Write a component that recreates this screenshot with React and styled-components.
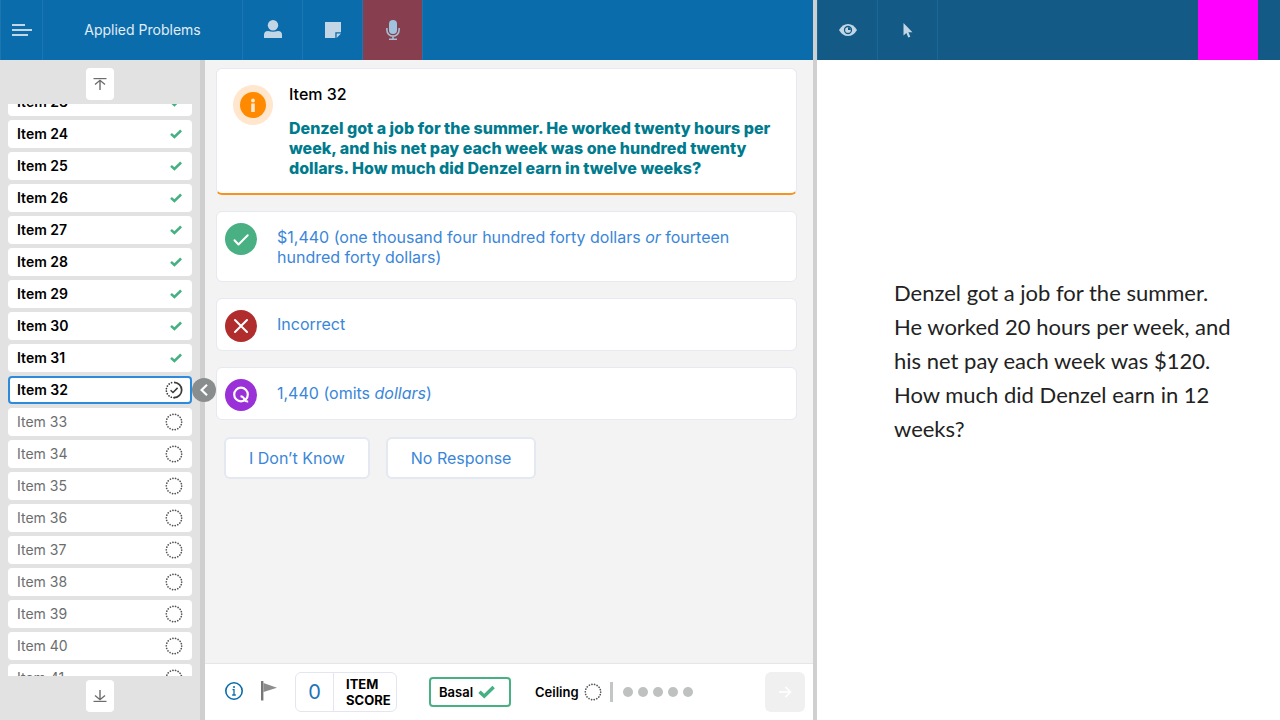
import React, { useLayoutEffect, useRef } from "react";
import styled, { createGlobalStyle, css } from "styled-components";

const GlobalStyle = createGlobalStyle`
  *, *::before, *::after { box-sizing: border-box; }
  body { margin: 0; font-family: Inter, "Liberation Sans", sans-serif; color: #000; }
  button { font: inherit; margin: 0; padding: 0; border: 0; background: none; cursor: pointer; }
  h1, h2, p, ul { margin: 0; padding: 0; font-weight: inherit; }
  svg { display: block; flex: none; }
`;

const Screen = styled.div`
  display: flex;
  height: 100vh;
  overflow: hidden;
`;

const ExaminerPane = styled.section`
  flex: 813 1 0;
  min-width: 0;
  display: flex;
  flex-direction: column;
`;

const PaneDivider = styled.div`
  flex: none;
  width: 4px;
  background: #d0d0d0;
`;

const ExamineePane = styled.section`
  flex: 463 1 0;
  min-width: 0;
  display: flex;
  flex-direction: column;
  background: #fff;
`;

const Toolbar = styled.header`
  flex: none;
  display: flex;
  height: 60px;
  background: ${(p) => (p.$dim ? "#135b86" : "#0a6cab")};
  ${(p) =>
    p.$dim &&
    css`
      padding-right: 22px;
    `}
`;

const ToolButton = styled.button`
  display: flex;
  align-items: center;
  justify-content: center;
  width: ${(p) => p.$width || 60}px;
  height: 60px;
  color: #c3d6e6;
  background: ${(p) => p.$fill || "transparent"};
  border-left: 1px solid ${(p) => (p.$dim ? "#1a679a" : "#1b76b1")};
`;

const ToolbarTitle = styled.h1`
  width: 200px;
  line-height: 60px;
  text-align: center;
  font-size: 14px;
  font-weight: 400;
  color: #e2edf5;
  border-left: 1px solid #1b76b1;
`;

const ToolbarSpacer = styled.div`
  flex: 1;
  border-left: 1px solid ${(p) => (p.$dim ? "#1a679a" : "#1b76b1")};
`;

const ColorSwatch = styled.button`
  width: 60px;
  height: 60px;
  background: #ff00ff;
`;

const Workspace = styled.div`
  flex: 1;
  min-height: 0;
  display: flex;
`;

const Sidebar = styled.nav`
  position: relative;
  flex: none;
  width: 205px;
  display: flex;
  flex-direction: column;
  background: #e2e2e2;
  border-right: 5px solid #cfcfcf;
`;

const JumpBar = styled.div`
  flex: none;
  height: 44px;
  display: flex;
  align-items: center;
  justify-content: center;
  padding-top: ${(p) => (p.$top ? 4 : 0)}px;
  padding-bottom: ${(p) => (p.$top ? 0 : 4)}px;
`;

const JumpButton = styled.button`
  display: flex;
  align-items: center;
  justify-content: center;
  width: 28px;
  height: 32px;
  border-radius: 4px;
  background: #fff;
  color: #6b6d6d;
`;

const ItemList = styled.ul`
  flex: 1;
  min-height: 0;
  overflow-y: auto;
  scrollbar-width: none;
  display: flex;
  flex-direction: column;
  gap: 4px;
  padding: 0 8px;
  list-style: none;
`;

const ItemRow = styled.li`
  flex: none;
  height: 28px;
`;

const ItemButton = styled.button`
  display: flex;
  align-items: center;
  justify-content: space-between;
  width: 100%;
  height: 28px;
  padding: 0 7px 1px;
  border: 2px solid #fff;
  border-radius: 4px;
  background: #fff;
  font-size: 14px;
  line-height: 16px;
  font-weight: ${(p) => (p.$pending ? 400 : 600)};
  color: ${(p) => (p.$pending ? "#6c6e6e" : "#000")};
  ${(p) =>
    p.$current &&
    css`
      border-color: #2e8bdc;
    `}
`;

const StatusSlot = styled.span`
  display: flex;
  justify-content: center;
  min-width: 14px;
`;

const CollapseButton = styled.button`
  position: absolute;
  top: calc(50% - 12px);
  right: -16px;
  display: flex;
  align-items: center;
  justify-content: center;
  width: 24px;
  height: 24px;
  border-radius: 50%;
  background: #8a8d8d;
  color: #fff;
`;

const Main = styled.main`
  flex: 1;
  min-width: 0;
  display: flex;
  flex-direction: column;
  background: #f3f3f3;
`;

const Cards = styled.div`
  flex: 1;
  min-height: 0;
  display: flex;
  flex-direction: column;
  gap: 16px;
  padding: 8px 16px 0 11px;
`;

const PromptCard = styled.article`
  display: flex;
  gap: 16px;
  padding: 16px 16px 15px;
  background: #fff;
  border: 1px solid #e6e8f2;
  border-bottom: 2px solid #f7941d;
  border-radius: 6px;
`;

const PromptBody = styled.div`
  flex: 1;
`;

const PromptTitle = styled.h2`
  font-size: 16px;
  line-height: 18px;
  font-weight: 500;
`;

const PromptText = styled.p`
  margin-top: 15px;
  font-size: 16px;
  line-height: 20px;
  font-weight: 800;
  color: #007b8e;
`;

const AnswerCard = styled.button`
  display: flex;
  align-items: flex-start;
  gap: 20px;
  width: 100%;
  padding: 11px 8px 8px;
  background: #fff;
  border: 1px solid #e6e8f2;
  border-radius: 6px;
  text-align: left;
`;

const AnswerText = styled.span`
  flex: 1;
  padding: 4px 48px 6px 0;
  font-size: 16px;
  line-height: 20px;
  font-weight: 400;
  color: #3a86d8;
`;

const OtherAnswers = styled.div`
  display: flex;
  gap: 16px;
  padding: 1px 0 0 8px;
`;

const OutlineButton = styled.button`
  height: 42px;
  padding: 0 23px;
  border: 2px solid #e3e8f1;
  border-radius: 6px;
  background: #fff;
  font-size: 16px;
  font-weight: 400;
  color: #3a86d8;
`;

const Footer = styled.footer`
  flex: none;
  display: flex;
  align-items: center;
  height: 57px;
  padding: 0 8px 0 20px;
  background: #fff;
  border-top: 1px solid #e6e6e6;
`;

const IconButton = styled.button`
  display: flex;
  margin-right: 18px;
  padding-bottom: 2px;
`;

const ScoreBox = styled.div`
  display: flex;
  align-items: center;
  width: 102px;
  height: 40px;
  border: 1px solid #e3e6f1;
  border-radius: 6px;
`;

const ScoreValue = styled.output`
  width: 38px;
  line-height: 38px;
  text-align: center;
  font-size: 20px;
  color: #2272b8;
  border-right: 1px solid #e3e6f1;
`;

const ScoreLabel = styled.span`
  padding-left: 12px;
  font-size: 13px;
  line-height: 16px;
  font-weight: 700;
`;

const BasalButton = styled.button`
  display: flex;
  align-items: center;
  gap: 5px;
  width: 82px;
  height: 30px;
  margin-left: 32px;
  padding-left: 8px;
  border: 2px solid #48b083;
  border-radius: 4px;
  font-size: 13px;
  font-weight: 600;
`;

const Ceiling = styled.div`
  display: flex;
  align-items: center;
  gap: 5px;
  margin-left: 24px;
  font-size: 13px;
  font-weight: 600;
`;

const FooterRule = styled.span`
  width: 3px;
  height: 20px;
  margin-left: 8px;
  background: #c4c5c5;
`;

const Dots = styled.div`
  display: flex;
  gap: 5px;
  margin-left: 10px;
`;

const Dot = styled.span`
  width: 10px;
  height: 10px;
  border-radius: 50%;
  background: #bfc1c1;
`;

const NextButton = styled.button`
  display: flex;
  align-items: center;
  justify-content: center;
  width: 40px;
  height: 40px;
  margin-left: auto;
  border-radius: 6px;
  background: #f0f0f0;
  color: #fff;
`;

const Stimulus = styled.p`
  padding: 216px 46px 0 77px;
  font-family: Lato, "Liberation Sans", sans-serif;
  font-size: 22px;
  line-height: 34px;
  color: #222;
`;

const MenuIcon = () => (
  <svg width="20" height="14" viewBox="0 0 20 14" stroke="currentColor" strokeWidth="2" aria-hidden="true">
    <path d="M0 2h13M0 7h20M0 12h16" />
  </svg>
);

const PersonIcon = () => (
  <svg width="18" height="20" viewBox="0 0 18 20" fill="currentColor" aria-hidden="true">
    <circle cx="9" cy="5.200" r="5.200" />
    <path d="M0 17.500V15a4 4 0 0 1 4-4q5 1.400 10 0a4 4 0 0 1 4 4v2.500a.5.5 0 0 1-.5.5H.5a.5.5 0 0 1-.5-.5z" />
  </svg>
);

const NoteIcon = () => (
  <svg width="16" height="16" viewBox="0 0 16 16" fill="currentColor" aria-hidden="true">
    <path d="M0 0h16v10.300h-5.700V16H0z" />
    <path d="M11.600 11.600H16L11.600 16z" />
  </svg>
);

const MicIcon = () => (
  <svg width="14" height="20" viewBox="0 0 14 20" aria-hidden="true">
    <rect x="3" y="0" width="8" height="14" rx="4" fill="#a0c4de" />
    <path d="M.9 8v2a6.100 6.100 0 0 0 12.200 0V8M7 16v3M3 19.200h8" fill="none" stroke="#a9bcd0" strokeWidth="1.600" />
  </svg>
);

const EyeIcon = () => (
  <svg width="18" height="12" viewBox="0 0 18 12" aria-hidden="true">
    <path d="M0 6Q3.500 0 9 0t9 6q-3.500 6-9 6T0 6z" fill="currentColor" />
    <circle cx="9" cy="6" r="3.500" fill="none" stroke="#135b86" strokeWidth="1.300" />
    <path d="M9 6V3.200A2.800 2.800 0 0 1 11.800 6z" fill="#135b86" />
  </svg>
);

const CursorIcon = () => (
  <svg width="10" height="15" viewBox="0 0 10 15" fill="currentColor" aria-hidden="true">
    <path d="M.5 0v12.600l2.900-2.700 1.900 4.600 2-.8-1.900-4.500h4z" />
  </svg>
);

const JumpIcon = ({ down }) => (
  <svg width="14" height="12" viewBox="0 0 14 12" fill="none" stroke="currentColor" aria-hidden="true">
    {down ? (
      <>
        <path d="M7 0v9.500M2 5.500 7 9.700l5-4.200" strokeWidth="1.400" />
        <path d="M.5 11.400h13" strokeWidth="1.200" />
      </>
    ) : (
      <>
        <path d="M7 12V2.500M2 6.500 7 2.300l5 4.200" strokeWidth="1.400" />
        <path d="M.5.6h13" strokeWidth="1.200" />
      </>
    )}
  </svg>
);

const TickIcon = ({ width = 12, height = 10 }) => (
  <svg width={width} height={height} viewBox="0 0 12 10" fill="none" stroke="#45b182" strokeWidth="2.500" aria-hidden="true">
    <path d="M1 4.800 4.400 8 11.100 1.500" />
  </svg>
);

const DottedCircle = () => (
  <svg width="18" height="18" viewBox="0 0 18 18" fill="none" stroke="#555" aria-hidden="true">
    <circle cx="9" cy="9" r="7.700" strokeWidth="1.700" strokeLinecap="round" strokeDasharray=".05 2.638" />
  </svg>
);

const ProgressCircle = () => (
  <svg width="18" height="18" viewBox="0 0 18 18" fill="none" stroke="#3a3a3a" aria-hidden="true">
    <path d="M9 1.300a7.700 7.700 0 0 1 0 15.400" strokeWidth="1.700" />
    <path d="M9 16.700A7.700 7.700 0 0 1 9 1.300" strokeWidth="1.700" strokeLinecap="round" strokeDasharray=".05 2.638" />
    <path d="M5.600 9.200 8 11.500l4.600-4.600" strokeWidth="1.500" />
  </svg>
);

const PromptIcon = () => (
  <svg width="40" height="40" viewBox="0 0 40 40" aria-hidden="true">
    <circle cx="20" cy="20" r="20" fill="#ffe6cc" />
    <circle cx="20" cy="20" r="13" fill="#ff8a00" />
    <circle cx="20" cy="15.500" r="1.900" fill="#ffe6cc" />
    <path d="M20 18.500V27" stroke="#ffe6cc" strokeWidth="3.600" />
  </svg>
);

const AnswerIcon = ({ kind }) => {
  const fill = { correct: "#48b083", incorrect: "#b12d2d", query: "#9a30d8" }[kind];
  return (
    <svg width="32" height="32" viewBox="0 0 32 32" fill="none" stroke="#fff" strokeWidth="2" aria-hidden="true">
      <circle cx="16" cy="16" r="16" fill={fill} stroke="none" />
      {kind === "correct" && <path d="m9.500 17.200 4 4.300 9.200-9.300" strokeLinecap="round" strokeLinejoin="round" />}
      {kind === "incorrect" && <path d="m10 10 12 12M22 10 10 22" strokeLinecap="round" />}
      {kind === "query" && (
        <>
          <circle cx="16" cy="15.500" r="6.800" strokeWidth="2.200" />
          <path d="M15.500 17.200q3 .2 4.200 3.600.6 1.800 3.500 1.600" strokeWidth="2" />
        </>
      )}
    </svg>
  );
};

const InfoIcon = () => (
  <svg width="18" height="18" viewBox="0 0 18 18" fill="none" stroke="#0a6cab" aria-hidden="true">
    <circle cx="9" cy="9" r="8.200" strokeWidth="1.600" />
    <path d="M7.500 7.600H9V13M7.200 13h3.600" strokeWidth="1.300" />
    <circle cx="9" cy="5" r="1" fill="#0a6cab" stroke="none" />
  </svg>
);

const FlagIcon = () => (
  <svg width="16" height="20" viewBox="0 0 16 20" aria-hidden="true">
    <path d="M2.500 2 16 6.800 2.500 11z" fill="#8d8d8d" />
    <path d="M1.200 0v19.500" stroke="#777" strokeWidth="2.400" />
  </svg>
);

const FIRST_ITEM = 23;
const LAST_ITEM = 41;
const CURRENT_ITEM = 32;
const items = Array.from({ length: LAST_ITEM - FIRST_ITEM + 1 }, (_, i) => FIRST_ITEM + i);

const StatusIcon = ({ number }) => {
  if (number < CURRENT_ITEM) return <TickIcon />;
  return number === CURRENT_ITEM ? <ProgressCircle /> : <DottedCircle />;
};

export default function App() {
  const currentRow = useRef(null);

  useLayoutEffect(() => {
    currentRow.current.scrollIntoView({ block: "center" });
  }, []);

  return (
    <>
      <GlobalStyle />
      <Screen>
        <ExaminerPane>
          <Toolbar>
            <ToolButton $width={42} aria-label="Menu"><MenuIcon /></ToolButton>
            <ToolbarTitle>Applied Problems</ToolbarTitle>
            <ToolButton aria-label="Examinee"><PersonIcon /></ToolButton>
            <ToolButton aria-label="Notes"><NoteIcon /></ToolButton>
            <ToolButton $fill="#873f4f" aria-label="Record"><MicIcon /></ToolButton>
            <ToolbarSpacer />
          </Toolbar>
          <Workspace>
            <Sidebar aria-label="Items">
              <JumpBar $top>
                <JumpButton aria-label="First item"><JumpIcon /></JumpButton>
              </JumpBar>
              <ItemList>
                {items.map((n) => (
                  <ItemRow key={n} ref={n === CURRENT_ITEM ? currentRow : undefined}>
                    <ItemButton $pending={n > CURRENT_ITEM} $current={n === CURRENT_ITEM}>
                      Item {n}
                      <StatusSlot><StatusIcon number={n} /></StatusSlot>
                    </ItemButton>
                  </ItemRow>
                ))}
              </ItemList>
              <JumpBar>
                <JumpButton aria-label="Last item"><JumpIcon down /></JumpButton>
              </JumpBar>
              <CollapseButton aria-label="Collapse item list">
                <svg width="8" height="12" viewBox="0 0 8 12" fill="none" stroke="currentColor" strokeWidth="2.200" aria-hidden="true">
                  <path d="M7 .8 1.600 6 7 11.200" />
                </svg>
              </CollapseButton>
            </Sidebar>
            <Main>
              <Cards>
                <PromptCard>
                  <PromptIcon />
                  <PromptBody>
                    <PromptTitle>Item 32</PromptTitle>
                    <PromptText>
                      Denzel got a job for the summer. He worked twenty hours per week, and his net pay each
                      week was one hundred twenty dollars. How much did Denzel earn in twelve weeks?
                    </PromptText>
                  </PromptBody>
                </PromptCard>
                <AnswerCard>
                  <AnswerIcon kind="correct" />
                  <AnswerText>
                    $1,440 (one thousand four hundred forty dollars <em>or</em> fourteen hundred forty dollars)
                  </AnswerText>
                </AnswerCard>
                <AnswerCard>
                  <AnswerIcon kind="incorrect" />
                  <AnswerText>Incorrect</AnswerText>
                </AnswerCard>
                <AnswerCard>
                  <AnswerIcon kind="query" />
                  <AnswerText>1,440 (omits <em>dollars</em>)</AnswerText>
                </AnswerCard>
                <OtherAnswers>
                  <OutlineButton>I Don’t Know</OutlineButton>
                  <OutlineButton>No Response</OutlineButton>
                </OtherAnswers>
              </Cards>
              <Footer>
                <IconButton aria-label="Information"><InfoIcon /></IconButton>
                <IconButton aria-label="Flag item"><FlagIcon /></IconButton>
                <ScoreBox>
                  <ScoreValue aria-label="Item score">0</ScoreValue>
                  <ScoreLabel>ITEM<br />SCORE</ScoreLabel>
                </ScoreBox>
                <BasalButton>
                  Basal
                  <TickIcon width={17} height={14} />
                </BasalButton>
                <Ceiling>
                  Ceiling
                  <DottedCircle />
                </Ceiling>
                <FooterRule />
                <Dots>
                  {[0, 1, 2, 3, 4].map((i) => <Dot key={i} />)}
                </Dots>
                <NextButton aria-label="Next item">
                  <svg width="14" height="12" viewBox="0 0 14 12" fill="none" stroke="currentColor" strokeWidth="1.600" aria-hidden="true">
                    <path d="M1 6h11.500M7.500 1l5 5-5 5" />
                  </svg>
                </NextButton>
              </Footer>
            </Main>
          </Workspace>
        </ExaminerPane>
        <PaneDivider />
        <ExamineePane>
          <Toolbar $dim>
            <ToolButton $dim aria-label="Show to examinee"><EyeIcon /></ToolButton>
            <ToolButton $dim aria-label="Pointer"><CursorIcon /></ToolButton>
            <ToolbarSpacer $dim />
            <ColorSwatch aria-label="Pointer color" />
          </Toolbar>
          <Stimulus>
            Denzel got a job for the summer. He worked 20 hours per week, and his net pay each week was
            $120. How much did Denzel earn in 12 weeks?
          </Stimulus>
        </ExamineePane>
      </Screen>
    </>
  );
}
